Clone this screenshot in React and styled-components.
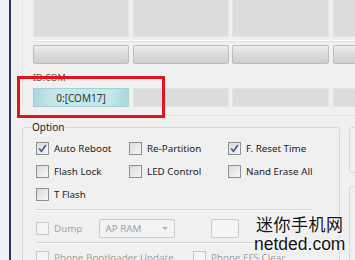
import React from "react";
import styled, { createGlobalStyle } from "styled-components";

const GlobalStyle = createGlobalStyle`
  html, body {
    margin: 0;
    padding: 0;
    background: #f0f0f0;
    overflow: hidden;
  }
  body {
    font-family: "Noto Sans", "Open Sans", sans-serif;
  }
`;

const Window = styled.div`
  position: relative;
  display: flex;
  width: 355px;
  height: 260px;
  overflow: hidden;
  background: #f0f0f0;
`;

const LeftStrip = styled.div`
  flex: 0 0 9px;
  background: #edf1f6;
  border-right: 2px solid #27355f;
`;

const Body = styled.div`
  flex: 1;
  padding-left: 11px;
  display: flex;
  flex-direction: column;
  min-width: 0;
`;

const Ports = styled.div`
  border-left: 1px solid #e2e2e2;
  padding-left: 10px;
`;

const PortGrid = styled.div`
  display: grid;
  grid-template-columns: 96px 96px 97px 96px;
  column-gap: 3.5px;
  height: ${(p) => p.$h}px;
  margin-top: ${(p) => p.$top || 0}px;
`;

const Cell = styled.div`
  background: #dcdcdc;
  border: 1px solid #e4e4e4;
  border-top: none;
`;

const Divider = styled.div`
  height: 1px;
  margin: ${(p) => p.$m || "3px 0"};
  background: #fbfbfb;
  border-bottom: 1px solid #e2e2e2;
`;

const BarButton = styled.div`
  border: 1px solid #bdbdbd;
  border-radius: 2px;
  background: linear-gradient(#eeeeee, #dadada 50%, #cfcfcf);
`;

const SmallLabel = styled.div`
  margin-top: 8px;
  height: 11px;
  font-size: 9px;
  line-height: 11px;
  color: #555;
`;

const ComCell = styled.div`
  display: flex;
  align-items: center;
  justify-content: center;
  font-size: 10px;
  color: #333;
  border: 1px solid ${(p) => (p.$active ? "#a6cfd3" : "#e4e4e4")};
  background: ${(p) =>
    p.$active
      ? "linear-gradient(90deg, #a9d8dc, #c4e8ea 20%, #c4e8ea 80%, #a9d8dc)"
      : "#dcdcdc"};
`;

const OptionsRow = styled.div`
  display: flex;
  gap: 9px;
  margin-top: 5px;
`;

const Group = styled.fieldset`
  margin: 0;
  border: 1px solid #d2d9de;
  border-radius: 3px;
  padding: ${(p) => p.$pad || "0"};
  width: ${(p) => p.$w}px;
  height: ${(p) => (p.$h ? `${p.$h}px` : "auto")};
  box-sizing: border-box;
  flex-shrink: 0;
`;

const Legend = styled.legend`
  padding: 0 1px;
  margin-left: ${(p) => p.$ml || 4}px;
  font-size: 10px;
  line-height: 12px;
  color: #222;
`;

const CheckGrid = styled.div`
  display: grid;
  grid-template-columns: 93px 99px auto;
  grid-auto-rows: 23px;
  margin-top: 4px;
`;

const CheckItem = styled.label`
  display: flex;
  align-items: center;
  gap: 5px;
  font-size: 9.8px;
  color: ${(p) => (p.$disabled ? "#a3a3a3" : "#222")};
  white-space: nowrap;
`;

const Box = styled.span`
  flex: 0 0 11px;
  width: 11px;
  height: 11px;
  border: 1px solid ${(p) => (p.$disabled ? "#c9c9c9" : "#8e8f8f")};
  background: ${(p) =>
    p.$disabled ? "#f4f4f4" : "linear-gradient(135deg, #dcdcdc, #f6f6f6)"};
  display: flex;
  align-items: center;
  justify-content: center;
`;

const Rule = styled.div`
  height: 1px;
  background: #d3d3d3;
  border-bottom: 1px solid #fbfbfb;
  margin: ${(p) => p.$m};
`;

const DumpRow = styled.div`
  display: flex;
  align-items: center;
  height: 20px;
`;

const Select = styled.div`
  margin-left: 17px;
  width: 76px;
  height: 19px;
  border: 1px solid #cacaca;
  border-radius: 2px;
  background: #f3f3f3;
  display: flex;
  align-items: center;
  justify-content: space-between;
  padding: 0 6px 0 5px;
  box-sizing: border-box;
  font-size: 9.8px;
  color: #a0a0a0;
`;

const Arrow = styled.span`
  width: 0;
  height: 0;
  border-left: 3px solid transparent;
  border-right: 3px solid transparent;
  border-top: 3px solid #b3b3b3;
`;

const EmptyBox = styled.div`
  margin-left: 36px;
  width: 28px;
  height: 19px;
  border: 1px solid #cacaca;
  border-radius: 2px;
  background: #f5f5f5;
  box-sizing: border-box;
`;

const BottomRow = styled.div`
  display: grid;
  grid-template-columns: 157px auto;
  height: 20px;
`;

const RightCol = styled.div`
  display: flex;
  flex-direction: column;
  gap: 7px;
`;

const GhostBox = styled.div`
  margin: ${(p) => p.$m};
  width: 20px;
  height: 11px;
  border: 1px solid #dedede;
  background: #ececec;
`;

const RedMark = styled.div`
  position: absolute;
  left: 17px;
  top: 76px;
  width: 148px;
  height: 42px;
  box-sizing: border-box;
  border: 3.5px solid #e3131b;
`;

const Watermark = styled.div`
  position: absolute;
  left: 254px;
  top: 213px;
  display: flex;
  flex-direction: column;
  align-items: center;
  color: #111;
  text-shadow: 0 0 2px #fff, 0 0 3px #fff;
`;

const MarkCn = styled.div`
  font-family: "Noto Sans CJK SC", sans-serif;
  font-size: 17px;
  line-height: 21px;
  letter-spacing: 0.5px;
`;

const MarkEn = styled.div`
  font-family: "Liberation Sans", Arial, sans-serif;
  font-size: 17.5px;
  line-height: 21px;
`;

function Check({ label, checked, disabled }) {
  return (
    <CheckItem $disabled={disabled}>
      <Box $disabled={disabled}>
        {checked && (
          <svg width="9" height="9" viewBox="0 0 9 9">
            <path
              d="M1.2 4.6 L3.4 7.4 L7.8 1"
              fill="none"
              stroke="#3c5ea6"
              strokeWidth="1.6"
            />
          </svg>
        )}
      </Box>
      {label}
    </CheckItem>
  );
}

export default function App() {
  return (
    <>
      <GlobalStyle />
      <Window>
        <LeftStrip />
        <Body>
          <Ports>
            <PortGrid $h={37}>
              <Cell />
              <Cell />
              <Cell />
              <Cell />
            </PortGrid>
            <Divider />
            <PortGrid $h={19}>
              <BarButton />
              <BarButton />
              <BarButton />
              <BarButton />
            </PortGrid>
            <SmallLabel>ID:COM</SmallLabel>
            <PortGrid $h={19} $top={5}>
              <ComCell $active>0:[COM17]</ComCell>
              <ComCell />
              <ComCell />
              <ComCell />
            </PortGrid>
          </Ports>
          <Divider $m="8px 0 0" />
          <OptionsRow>
            <Group $w={310} $pad="0 27px 0 13px">
              <Legend $ml={-5}>Option</Legend>
              <CheckGrid>
                <Check label="Auto Reboot" checked />
                <Check label="Re-Partition" />
                <Check label="F. Reset Time" checked />
                <Check label="Flash Lock" />
                <Check label="LED Control" />
                <Check label="Nand Erase All" />
                <Check label="T Flash" />
              </CheckGrid>
              <Rule $m="3px 0 7px" />
              <DumpRow>
                <Check label="Dump" disabled />
                <Select>
                  AP RAM
                  <Arrow />
                </Select>
                <EmptyBox />
              </DumpRow>
              <Rule $m="4px 0 3px" />
              <BottomRow>
                <Check label="Phone Bootloader Update" disabled />
                <Check label="Phone EFS Clear" disabled />
              </BottomRow>
            </Group>
            <RightCol>
              <Group $w={40} $h={52}>
                <Legend>Ra</Legend>
              </Group>
              <Group $w={40} $h={90}>
                <Legend>Fi</Legend>
                <GhostBox $m="14px 0 0 9px" />
                <GhostBox $m="18px 0 0 9px" />
              </Group>
            </RightCol>
          </OptionsRow>
        </Body>
        <RedMark />
        <Watermark>
          <MarkCn>迷你手机网</MarkCn>
          <MarkEn>netded.com</MarkEn>
        </Watermark>
      </Window>
    </>
  );
}
